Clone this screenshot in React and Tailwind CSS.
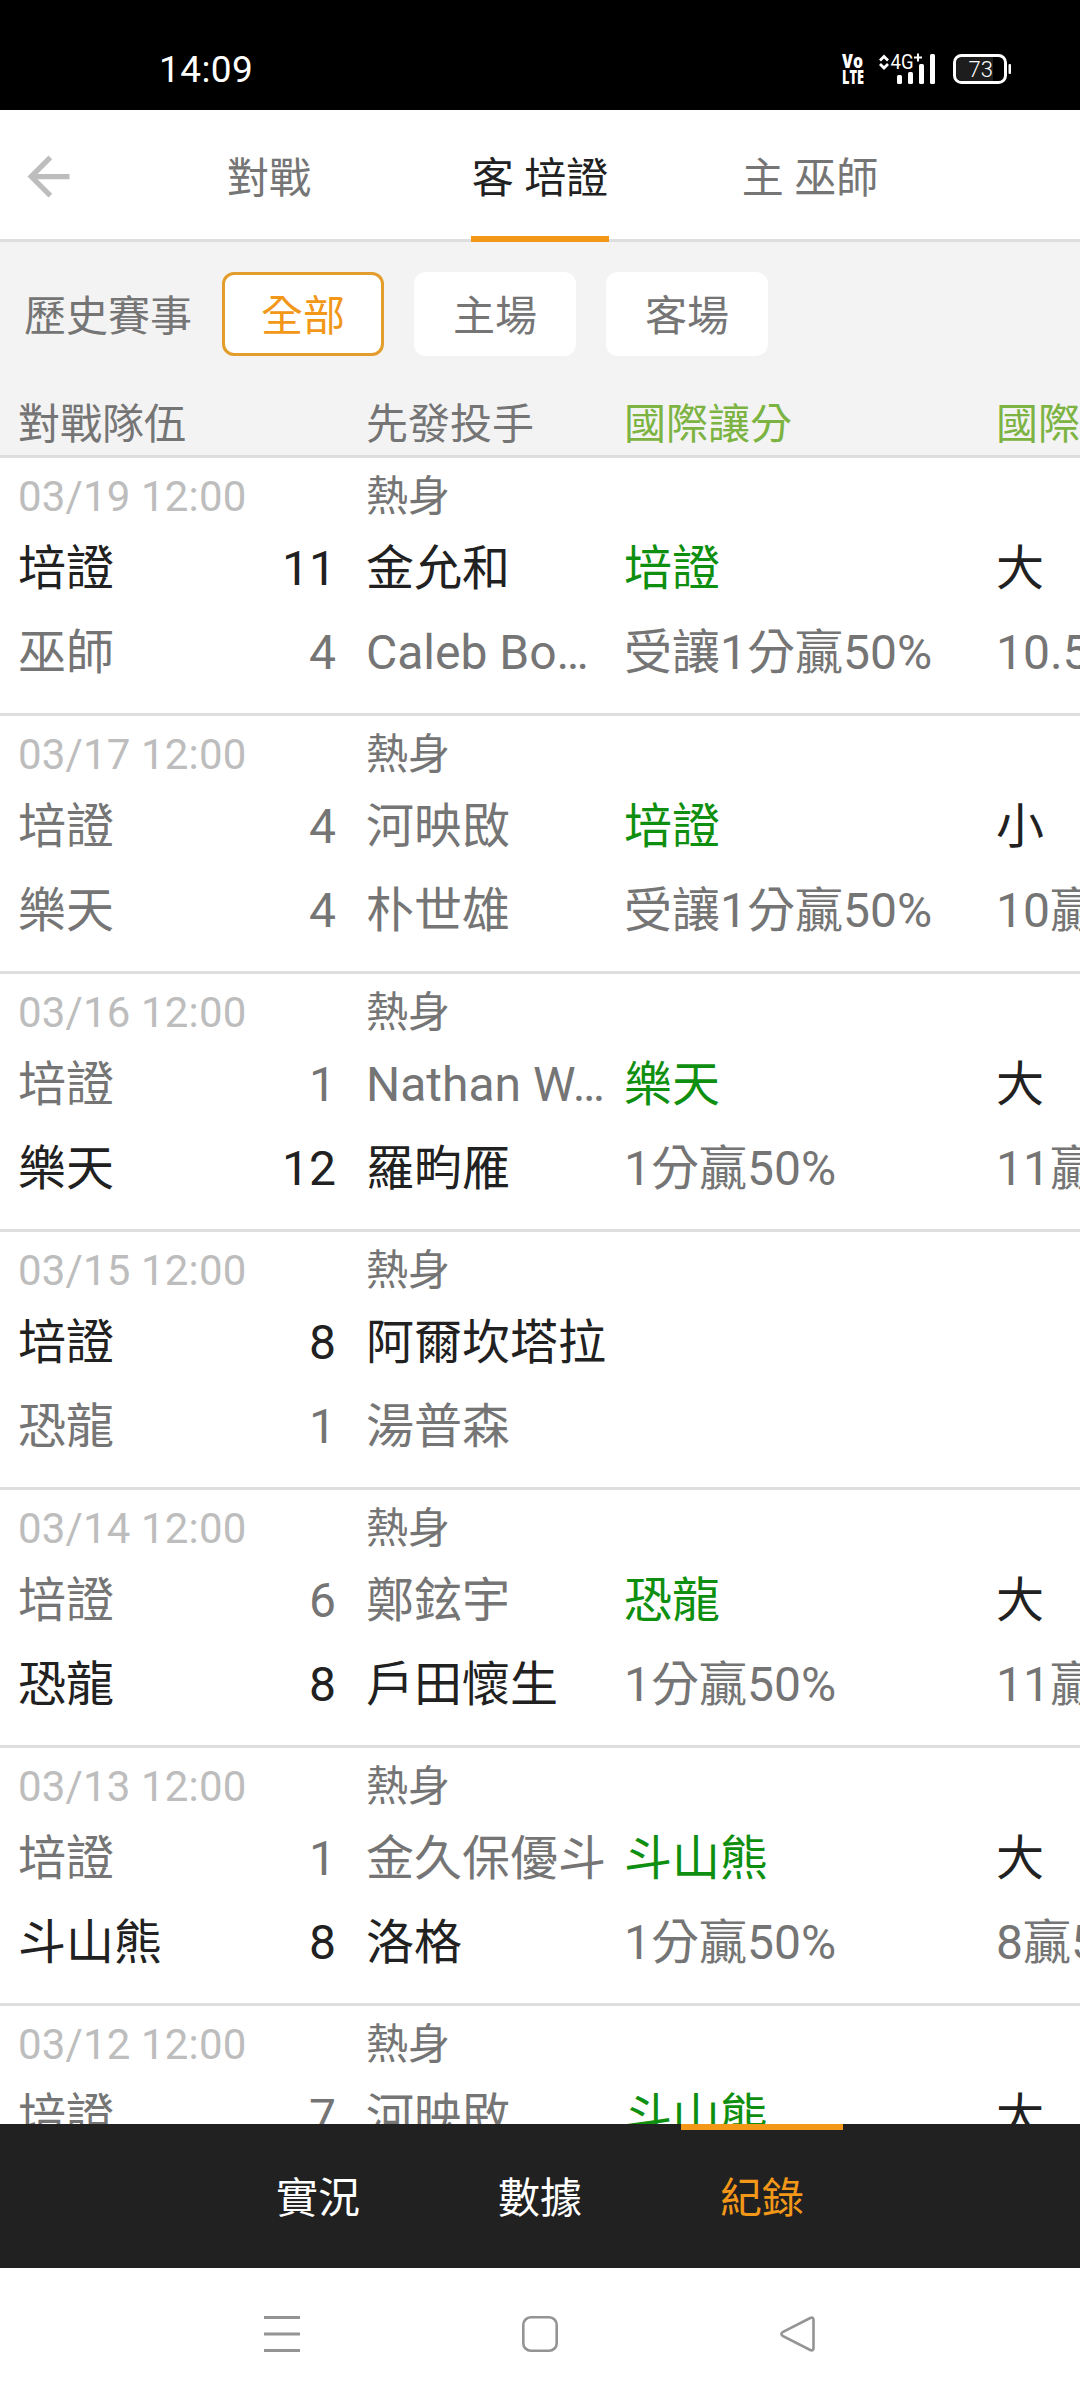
import React from "react";

const games = [
  {
    date: "03/19 12:00",
    teams: [
      { name: "培證", score: 11, pitcher: "金允和", win: true },
      { name: "巫師", score: 4, pitcher: "Caleb Bo…", win: false },
    ],
    spread: ["培證", "受讓1分贏50%"],
    total: ["大", "10.5贏50%"],
  },
  {
    date: "03/17 12:00",
    teams: [
      { name: "培證", score: 4, pitcher: "河映敃", win: false },
      { name: "樂天", score: 4, pitcher: "朴世雄", win: false },
    ],
    spread: ["培證", "受讓1分贏50%"],
    total: ["小", "10贏50%"],
  },
  {
    date: "03/16 12:00",
    teams: [
      { name: "培證", score: 1, pitcher: "Nathan W…", win: false },
      { name: "樂天", score: 12, pitcher: "羅畇雁", win: true },
    ],
    spread: ["樂天", "1分贏50%"],
    total: ["大", "11贏50%"],
  },
  {
    date: "03/15 12:00",
    teams: [
      { name: "培證", score: 8, pitcher: "阿爾坎塔拉", win: true },
      { name: "恐龍", score: 1, pitcher: "湯普森", win: false },
    ],
  },
  {
    date: "03/14 12:00",
    teams: [
      { name: "培證", score: 6, pitcher: "鄭鉉宇", win: false },
      { name: "恐龍", score: 8, pitcher: "戶田懷生", win: true },
    ],
    spread: ["恐龍", "1分贏50%"],
    total: ["大", "11贏50%"],
  },
  {
    date: "03/13 12:00",
    teams: [
      { name: "培證", score: 1, pitcher: "金久保優斗", win: false },
      { name: "斗山熊", score: 8, pitcher: "洛格", win: true },
    ],
    spread: ["斗山熊", "1分贏50%"],
    total: ["大", "8贏50%"],
  },
  {
    date: "03/12 12:00",
    teams: [{ name: "培證", score: 7, pitcher: "河映敃", win: false }],
    spread: ["斗山熊"],
    total: ["大"],
  },
];

function StatusBar() {
  return (
    <div className="flex h-[110px] shrink-0 items-center justify-between bg-black pt-7 pr-[68px] pl-[159px] text-white">
      <span className="text-[37px] leading-none tracking-[0.4px]">14:09</span>
      <div className="flex items-center">
        <svg width="170" height="36" viewBox="0 0 170 36" fill="none">
          <g fill="#fff" fontFamily="'Open Sans', sans-serif" fontWeight="800">
            <text x="0" y="17" fontSize="19" textLength="21" lengthAdjust="spacingAndGlyphs">Vo</text>
            <text x="0" y="33" fontSize="18.5" textLength="22" lengthAdjust="spacingAndGlyphs">LTE</text>
          </g>
          <path d="M38 9.500l4-4 4 4M38 13l4 4 4-4" stroke="#fff" strokeWidth="2.8" />
          <text x="48.5" y="17.5" fontSize="20" fill="#fff" fontFamily="Roboto, sans-serif" textLength="23" lengthAdjust="spacingAndGlyphs">4G</text>
          <path d="M72 6.500h8M76 2.500v8" stroke="#fff" strokeWidth="2" />
          <g fill="#fff">
            <rect x="55" y="24" width="5" height="9" rx="1.5" />
            <rect x="66" y="21" width="5" height="12" rx="1.5" />
            <rect x="77" y="13" width="5" height="20" rx="1.5" />
            <rect x="88" y="3" width="5" height="30" rx="1.5" />
          </g>
          <path d="M121 6h30v24h-30a7 7 0 0 1-7-7V13a7 7 0 0 1 7-7z" fill="#1d1d1d" />
          <rect x="112.500" y="4.500" width="51" height="27" rx="7" stroke="#fff" strokeWidth="3" />
          <rect x="166.500" y="13" width="2.500" height="10" rx="1" fill="#fff" />
          <text x="126.500" y="25.500" fontSize="22" fill="#fff" fontFamily="Roboto, sans-serif" fontWeight="300">73</text>
        </svg>
      </div>
    </div>
  );
}

function Header() {
  return (
    <div className="flex h-[132px] shrink-0 border-b-[3px] border-[#dedede] text-[42px] leading-none text-[#757575]">
      <button className="flex w-[96px] items-center pt-[3px] pl-[17px]">
        <svg width="63" height="63" viewBox="0 0 24 24" fill="#bdbdbd">
          <path d="M20 11H7.830l5.590-5.590L12 4l-8 8 8 8 1.410-1.410L7.830 13H20v-2z" />
        </svg>
      </button>
      <div className="-mb-[3px] flex pl-[130px] whitespace-nowrap">
        <button className="w-[86px] pt-[5px]">對戰</button>
        <button className="ml-[159px] w-[138px] border-b-[6px] border-[#f29718] pt-[11px] text-[#212121]">
          客 培證
        </button>
        <button className="ml-[132px] w-[138px] pt-[5px]">主 巫師</button>
      </div>
    </div>
  );
}

function Filters() {
  return (
    <div className="flex h-[144px] items-center gap-[30px] pl-[24px] text-[42px] leading-none text-[#757575]">
      <span className="w-[168px] pt-[5px] whitespace-nowrap">歷史賽事</span>
      <button className="h-[84px] w-[162px] rounded-[12px] border-[3px] border-[#e39d2c] bg-white pt-[5px] text-[#f29718]">
        全部
      </button>
      <button className="h-[84px] w-[162px] rounded-[12px] bg-white pt-[5px]">主場</button>
      <button className="h-[84px] w-[162px] rounded-[12px] bg-white pt-[5px]">客場</button>
    </div>
  );
}

function Columns() {
  return (
    <div className="flex h-[72px] whitespace-nowrap border-b-[3px] border-[#dedede] pl-[18px] text-[42px] leading-[78px] text-[#757575]">
      <span className="w-[348px] shrink-0">對戰隊伍</span>
      <span className="w-[258px] shrink-0">先發投手</span>
      <span className="w-[372px] shrink-0 text-[#7cb342]">國際讓分</span>
      <span className="shrink-0 text-[#7cb342]">國際大小</span>
    </div>
  );
}

function GameRow({ game }) {
  return (
    <div className="h-[258px] shrink-0 whitespace-nowrap border-b-[3px] border-[#dedede] pl-[18px] text-[48px] text-[#757575]">
      <div className="flex h-[71px] text-[42px] leading-[77px]">
        <span className="w-[348px] shrink-0 tracking-[0.15px] text-[#bdbdbd]">
          {game.date}
        </span>
        <span>熱身</span>
      </div>
      {game.teams.map((team, i) => (
        <div key={i} className="flex h-[84px] leading-[79px]">
          <div
            className={`flex shrink-0 ${team.win ? "text-[#212121]" : ""}`}
          >
            <span className="w-[218px]">{team.name}</span>
            <span className="w-[100px] text-right">{team.score}</span>
            <span className="ml-[30px] w-[258px]">{team.pitcher}</span>
          </div>
          {game.spread && (
            <>
              <span
                className={`w-[372px] shrink-0 ${i === 0 ? "text-[#0f8f0f]" : ""}`}
              >
                {game.spread[i]}
              </span>
              <span className={`shrink-0 ${i === 0 ? "text-[#212121]" : ""}`}>
                {game.total[i]}
              </span>
            </>
          )}
        </div>
      ))}
    </div>
  );
}

function BottomTabs() {
  return (
    <div className="flex h-[144px] shrink-0 justify-center gap-[60px] bg-[#212121] text-[42px] leading-none text-white">
      <button className="w-[162px] pt-[5px]">實況</button>
      <button className="w-[162px] pt-[5px]">數據</button>
      <button className="w-[162px] border-t-[6px] border-[#f29718] pb-[1px] text-[#f29718]">
        紀錄
      </button>
    </div>
  );
}

function NavBar() {
  return (
    <div className="flex h-[132px] shrink-0 items-center justify-center gap-[222px] bg-white">
      <svg width="36" height="36" viewBox="0 0 36 36" stroke="#949494" strokeWidth="3">
        <path d="M0 1.500h36M0 18h36M0 34.500h36" />
      </svg>
      <svg width="36" height="36" viewBox="0 0 36 36" fill="none" stroke="#949494" strokeWidth="2.600">
        <rect x="1.300" y="1.300" width="33.400" height="33.400" rx="7.500" />
      </svg>
      <svg width="36" height="36" viewBox="0 0 36 36" fill="none" stroke="#949494" strokeWidth="2.600">
        <path d="M2.600 16.200L30.200 2Q33.500 .8 33.500 4V32Q33.500 35.200 30.200 34L2.600 19.800Q.2 18 2.600 16.200z" />
      </svg>
    </div>
  );
}

export default function App() {
  return (
    <div className="flex h-[2400px] w-[1080px] flex-col overflow-hidden bg-white font-[Roboto,'Noto_Sans_CJK_TC',sans-serif]">
      <StatusBar />
      <Header />
      <div className="shrink-0 bg-[#f3f3f3]">
        <Filters />
        <Columns />
      </div>
      <div className="flex-1 overflow-hidden">
        {games.map((game) => (
          <GameRow key={game.date} game={game} />
        ))}
      </div>
      <BottomTabs />
      <NavBar />
    </div>
  );
}
